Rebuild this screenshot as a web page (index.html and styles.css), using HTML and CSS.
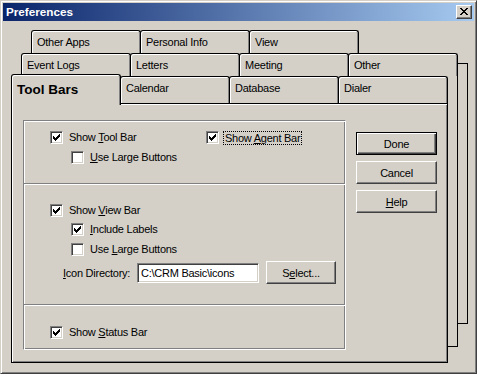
FILE: index.html
```html
<!DOCTYPE html>
<html lang="en">

<head>
    <meta charset="UTF-8">
    <meta name="viewport" content="width=device-width, initial-scale=1.0">
    <title>Preferences</title>
    <link rel="stylesheet" href="styles.css">
</head>

<body>
    <div class="window">
        <div class="titlebar">
            <span class="title">Preferences</span>
            <span class="close">
                <svg width="8" height="7" viewBox="0 0 8 7" shape-rendering="crispEdges">
                    <path fill="#000" d="M0 0h2v1h-2z M6 0h2v1h-2z M1 1h2v1h-2z M5 1h2v1h-2z M2 2h4v1h-4z M3 3h2v1h-2z M2 4h4v1h-4z M1 5h2v1h-2z M5 5h2v1h-2z M0 6h2v1h-2z M6 6h2v1h-2z" />
                </svg>
            </span>
        </div>

        <div class="tabctl">
            <div class="sheet sheet-back"></div>
            <div class="sheet sheet-mid"></div>

            <div class="tabrow row-back">
                <div class="tab">Other Apps</div>
                <div class="tab">Personal Info</div>
                <div class="tab">View</div>
            </div>
            <div class="tabrow row-mid">
                <div class="tab">Event Logs</div>
                <div class="tab">Letters</div>
                <div class="tab">Meeting</div>
                <div class="tab">Other</div>
            </div>
            <div class="tabrow row-front">
                <div class="tab active">Tool Bars</div>
                <div class="tab">Calendar</div>
                <div class="tab">Database</div>
                <div class="tab">Dialer</div>
            </div>

            <div class="page">
                <div class="group">
                    <div class="section s-tool">
                        <div class="row">
                            <label class="check first">
                                <span class="box"><svg width="7" height="7" viewBox="0 0 7 7" shape-rendering="crispEdges"><path d="M0 2h1v3h-1z M1 3h1v3h-1z M2 4h1v3h-1z M3 3h1v3h-1z M4 2h1v3h-1z M5 1h1v3h-1z M6 0h1v3h-1z" /></svg></span>
                                <span class="text">Show <u>T</u>ool Bar</span>
                            </label>
                            <label class="check">
                                <span class="box"><svg width="7" height="7" viewBox="0 0 7 7" shape-rendering="crispEdges"><path d="M0 2h1v3h-1z M1 3h1v3h-1z M2 4h1v3h-1z M3 3h1v3h-1z M4 2h1v3h-1z M5 1h1v3h-1z M6 0h1v3h-1z" /></svg></span>
                                <span class="text focus">Show <u>A</u>gent Bar</span>
                            </label>
                        </div>
                        <div class="row sub">
                            <label class="check">
                                <span class="box"></span>
                                <span class="text"><u>U</u>se Large Buttons</span>
                            </label>
                        </div>
                    </div>

                    <div class="section s-view">
                        <div class="row">
                            <label class="check">
                                <span class="box"><svg width="7" height="7" viewBox="0 0 7 7" shape-rendering="crispEdges"><path d="M0 2h1v3h-1z M1 3h1v3h-1z M2 4h1v3h-1z M3 3h1v3h-1z M4 2h1v3h-1z M5 1h1v3h-1z M6 0h1v3h-1z" /></svg></span>
                                <span class="text">Show <u>V</u>iew Bar</span>
                            </label>
                        </div>
                        <div class="row sub">
                            <label class="check">
                                <span class="box"><svg width="7" height="7" viewBox="0 0 7 7" shape-rendering="crispEdges"><path d="M0 2h1v3h-1z M1 3h1v3h-1z M2 4h1v3h-1z M3 3h1v3h-1z M4 2h1v3h-1z M5 1h1v3h-1z M6 0h1v3h-1z" /></svg></span>
                                <span class="text"><u>I</u>nclude Labels</span>
                            </label>
                        </div>
                        <div class="row sub">
                            <label class="check">
                                <span class="box"></span>
                                <span class="text">Use <u>L</u>arge Buttons</span>
                            </label>
                        </div>
                        <div class="iconrow">
                            <span class="iconlabel"><u>I</u>con Directory:</span>
                            <input class="field" type="text" value="C:\CRM Basic\icons">
                            <button class="btn select">S<u>e</u>lect...</button>
                        </div>
                    </div>

                    <div class="section s-status">
                        <div class="row">
                            <label class="check">
                                <span class="box"><svg width="7" height="7" viewBox="0 0 7 7" shape-rendering="crispEdges"><path d="M0 2h1v3h-1z M1 3h1v3h-1z M2 4h1v3h-1z M3 3h1v3h-1z M4 2h1v3h-1z M5 1h1v3h-1z M6 0h1v3h-1z" /></svg></span>
                                <span class="text">Show <u>S</u>tatus Bar</span>
                            </label>
                        </div>
                    </div>
                </div>

                <div class="buttons">
                    <button class="btn default">Done</button>
                    <button class="btn">Cancel</button>
                    <button class="btn"><u>H</u>elp</button>
                </div>
            </div>
        </div>
    </div>
</body>

</html>
```

FILE: styles.css
```css
* {
    margin: 0;
    padding: 0;
    box-sizing: border-box;
}

body {
    background-color: #d4d0c8;
    font-family: "Liberation Sans", Arial, sans-serif;
    font-size: 11px;
    letter-spacing: -0.25px;
    color: #000;
}

.window {
    width: 477px;
    height: 374px;
    padding: 2px;
    background-color: #d4d0c8;
    border: 1px solid;
    border-color: #d4d0c8 #404040 #404040 #d4d0c8;
    box-shadow: inset 1px 1px #fff, inset -1px -1px #808080;
}

/* caption */

.titlebar {
    height: 18px;
    display: flex;
    align-items: center;
    justify-content: space-between;
    padding: 0 2px 0 3px;
    background: linear-gradient(to right, #0a246a, #a6caf0);
    color: #fff;
}

.title {
    font-weight: bold;
    font-size: 11.7px;
    letter-spacing: 0;
    line-height: 18px;
}

.close {
    width: 16px;
    height: 14px;
    background-color: #d4d0c8;
    border: 1px solid;
    border-color: #fff #404040 #404040 #fff;
    box-shadow: inset -1px -1px #808080;
}

.close svg {
    display: block;
    margin: 2px 0 0 3px;
}

/* tab control */

.tabctl {
    position: relative;
    width: 457px;
    margin: 9px 0 0 8px;
}

.sheet {
    position: absolute;
    width: 10px;
    background-color: #d4d0c8;
    border: 1px solid #000;
    border-left: none;
}

.sheet-back {
    left: 447px;
    top: 33px;
    height: 261px;
}

.sheet-mid {
    left: 437px;
    top: 46px;
    height: 271px;
    border-top: none;
}

.tabrow {
    display: flex;
    height: 23px;
}

.row-back {
    padding-left: 20px;
}

.row-mid {
    padding-left: 10px;
}

.row-front {
    height: 27px;
}

.tab {
    width: 110px;
    height: 23px;
    padding: 0 0 0 5px;
    line-height: 22px;
    background-color: #d4d0c8;
    border: 1px solid #000;
    border-bottom: none;
    border-radius: 3px 3px 0 0;
    box-shadow: inset 1px 1px #fff, inset -1px 0 #808080;
    white-space: nowrap;
}

.tab+.tab {
    margin-left: -1px;
}

.row-front .tab {
    height: 27px;
}

.row-front .tab.active {
    position: relative;
    z-index: 1;
    height: 31px;
    margin-top: -2px;
    padding-top: 4px;
    line-height: 21px;
    font-size: 13.5px;
    font-weight: bold;
    letter-spacing: 0;
}

.page {
    display: flex;
    align-items: flex-start;
    width: 437px;
    height: 260px;
    padding: 16px 0 0 11px;
    background-color: #d4d0c8;
    border: 1px solid #000;
    box-shadow: inset 1px 1px #fff, inset -1px -1px #808080;
}

/* etched group with three sections */

.group {
    display: flex;
    flex-direction: column;
    width: 323px;
    height: 230px;
    border: 1px solid;
    border-color: #808080 #fff #fff #808080;
    box-shadow: inset 1px 1px #fff, inset -1px -1px #808080;
}

.section {
    padding-left: 26px;
}

.section+.section {
    border-top: 1px solid #808080;
    box-shadow: inset 0 1px #fff;
}

.s-tool {
    height: 62px;
    padding-top: 10px;
}

.s-view {
    height: 121px;
    padding-top: 20px;
}

.s-status {
    flex: 1;
    padding-top: 21px;
}

.row {
    display: flex;
    align-items: center;
    height: 13px;
}

.row+.row {
    margin-top: 7px;
}

.s-view .row.sub:nth-child(2) {
    margin-top: 6px;
}

.row.sub {
    padding-left: 21px;
}

.check {
    display: flex;
    align-items: center;
    height: 13px;
}

.check.first {
    width: 156px;
}

.box {
    width: 13px;
    height: 13px;
    flex: none;
    background-color: #fff;
    border: 1px solid;
    border-color: #808080 #fff #fff #808080;
    box-shadow: inset 1px 1px #404040, inset -1px -1px #d4d0c8;
}

.box svg {
    display: block;
    margin: 2px 0 0 2px;
}

.text {
    margin-left: 6px;
    line-height: 13px;
    white-space: nowrap;
}

.text.focus {
    margin-left: 4px;
    padding: 0 1px;
    line-height: 12px;
    border: 1px dotted #000;
}

.iconrow {
    display: flex;
    align-items: center;
    height: 23px;
    margin-top: 5px;
    padding-left: 13px;
}

.iconlabel {
    width: 74px;
    white-space: nowrap;
}

.field {
    width: 122px;
    height: 20px;
    padding-left: 3px;
    font: inherit;
    letter-spacing: inherit;
    color: #000;
    background-color: #fff;
    border: 1px solid;
    border-color: #808080 #fff #fff #808080;
    box-shadow: inset 1px 1px #404040, inset -1px -1px #d4d0c8;
    outline: none;
}

/* push buttons */

.btn {
    width: 81px;
    height: 23px;
    font: inherit;
    letter-spacing: inherit;
    color: #000;
    background-color: #d4d0c8;
    border: 1px solid;
    border-color: #fff #404040 #404040 #fff;
    box-shadow: inset -1px -1px #808080;
}

.btn.default {
    border-color: #000;
    box-shadow: inset 1px 1px #fff, inset -1px -1px #404040, inset -2px -2px #808080;
}

.btn.select {
    width: 70px;
    margin-left: 7px;
}

.buttons {
    display: flex;
    flex-direction: column;
    gap: 6px;
    margin: 12px 0 0 10px;
}
```
